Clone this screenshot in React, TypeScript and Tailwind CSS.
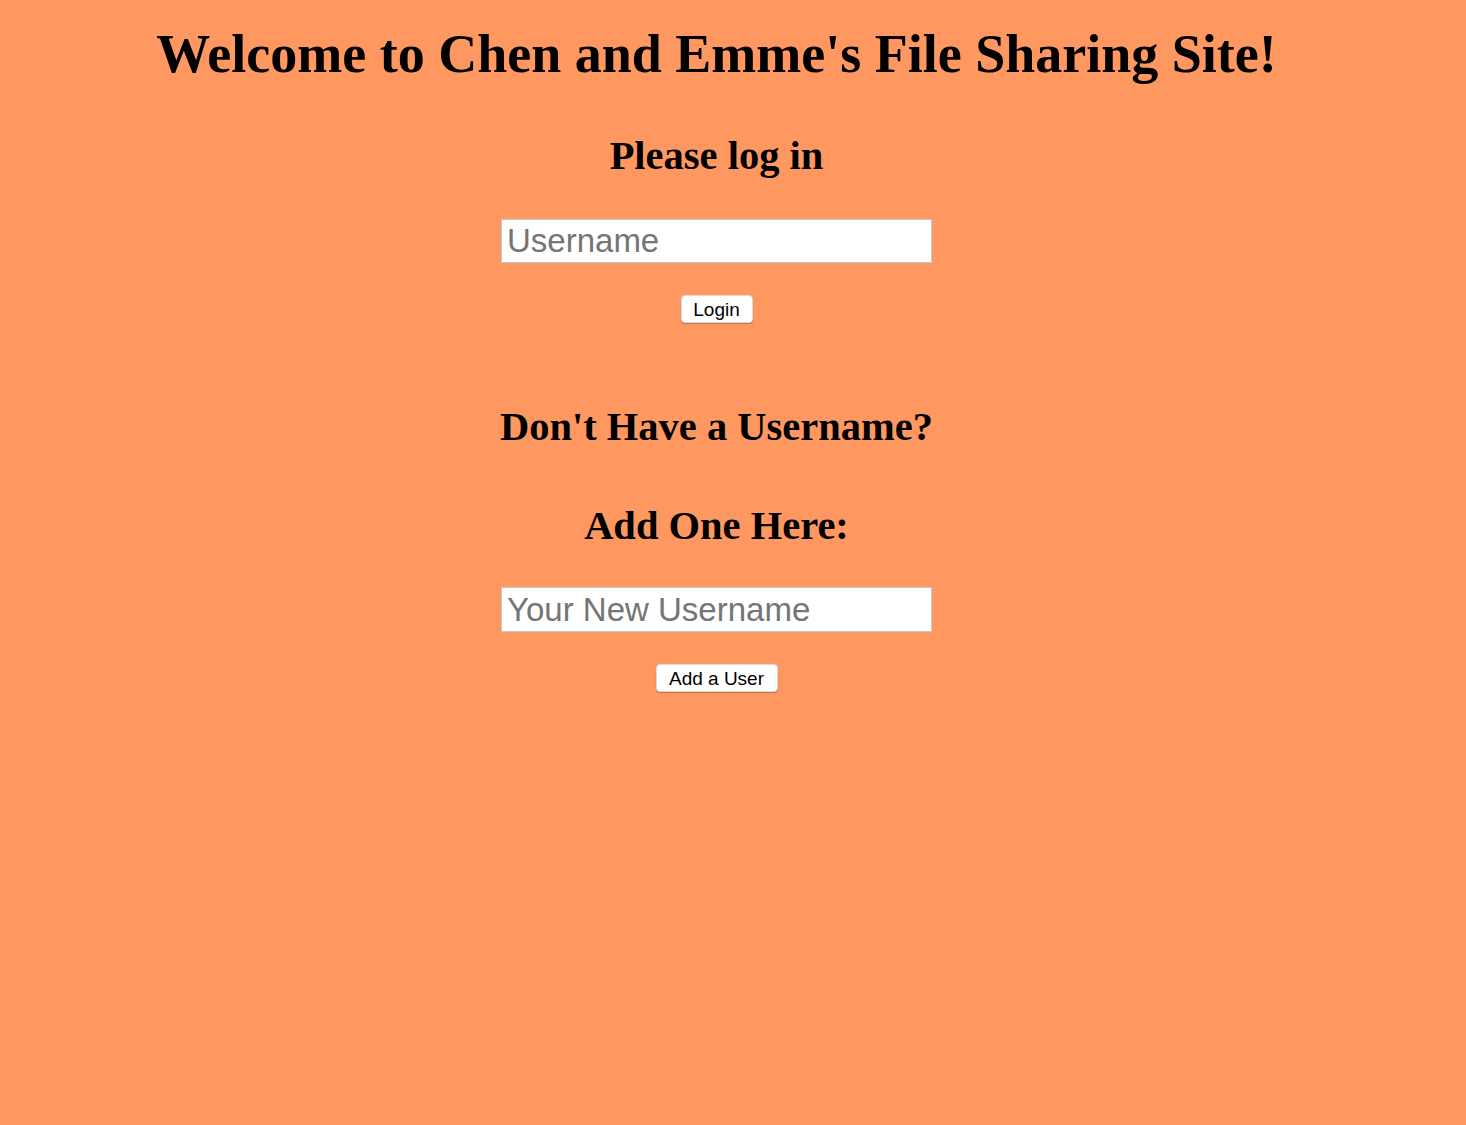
export default function App() {
  return (
    <main className="min-h-screen bg-[#ff9860] pr-[33px] text-black">
      <div className="flex flex-col items-center pt-[22px]">
        <h1 className="font-['Liberation_Serif',serif] text-[54px] font-bold leading-[64px]">
          Welcome to Chen and Emme's File Sharing Site!
        </h1>

        <h2 className="mt-[46px] font-['Liberation_Serif',serif] text-[40.5px] font-bold leading-[48px]">Please log in</h2>
        <input
          type="text"
          placeholder="Username"
          className="mt-[39px] h-[44px] w-[431px] border border-[#c8c8c8] bg-white px-[5px] font-['Liberation_Sans',sans-serif] text-[33px] text-black placeholder:text-[#757575] outline-none"
        />
        <button className="mt-[32px] h-[28px] w-[72px] rounded-[4px] border border-[#d9d9d9] bg-white font-['Liberation_Sans',sans-serif] text-[19px] leading-none text-black shadow-[0_1px_1px_rgba(0,0,0,0.25)]">
          Login
        </button>

        <h2 className="mt-[80px] font-['Liberation_Serif',serif] text-[40.5px] font-bold leading-[48px]">Don't Have a Username?</h2>
        <h2 className="mt-[51px] font-['Liberation_Serif',serif] text-[40.5px] font-bold leading-[48px]">Add One Here:</h2>
        <input
          type="text"
          placeholder="Your New Username"
          className="mt-[37px] h-[45px] w-[431px] border border-[#c8c8c8] bg-white px-[5px] font-['Liberation_Sans',sans-serif] text-[33px] text-black placeholder:text-[#757575] outline-none"
        />
        <button className="mt-[32px] h-[28px] w-[122px] rounded-[4px] border border-[#d9d9d9] bg-white font-['Liberation_Sans',sans-serif] text-[19px] leading-none text-black shadow-[0_1px_1px_rgba(0,0,0,0.25)]">
          Add a User
        </button>
      </div>
    </main>
  );
}
